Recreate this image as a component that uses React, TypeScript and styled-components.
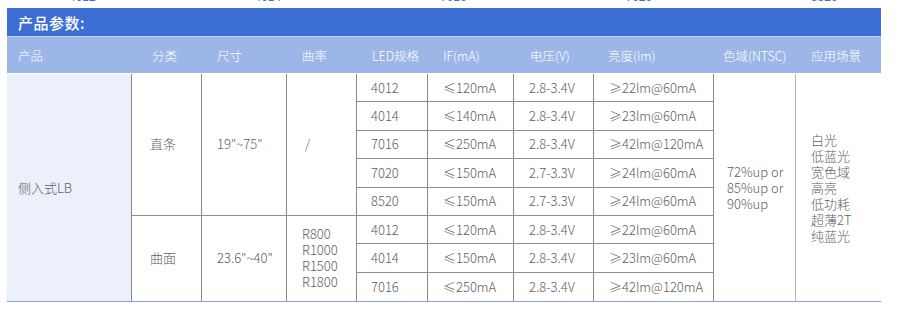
import React from "react";
import styled, { createGlobalStyle } from "styled-components";

const GlobalStyle = createGlobalStyle`
  html, body { margin: 0; padding: 0; background: #ffffff; }
  body { font-family: "Noto Sans CJK SC", "Noto Sans", sans-serif; }
`;

const Page = styled.div`
  width: 874px;
  padding: 0 19px 0 7px;
`;

const TopStrip = styled.div`
  height: 8px;
  overflow: hidden;
`;

const TopRow = styled.div`
  display: grid;
  grid-template-columns: repeat(5, 185.5px);
  padding-left: 62px;
  margin-top: -10px;
  font-size: 12px;
  line-height: 12px;
  color: #3f6fd2;
`;

const TitleBar = styled.div`
  height: 28px;
  background: #3c6ed3;
  border-bottom: 1px solid #c2d2f2;
  color: #ffffff;
  font-size: 15px;
  font-weight: 500;
  display: flex;
  align-items: center;
  padding-left: 11px;
  letter-spacing: 0.5px;
`;

const cols = "125px 70px 85px 70px 71px 86px 80px 120px 82px 85px";

const HeaderRow = styled.div`
  display: grid;
  grid-template-columns: ${cols};
  height: 36px;
  background: #9db6e8;
  margin-bottom: 1px;
`;

const HeadCell = styled.div<{ $pl: number }>`
  display: flex;
  align-items: center;
  padding-left: ${(p) => p.$pl}px;
  color: #ffffff;
  font-size: 12.5px;
  font-weight: 300;
  white-space: nowrap;
`;

const Body = styled.div`
  display: grid;
  grid-template-columns: ${cols};
  grid-template-rows: repeat(8, 1fr);
  height: 228px;
  box-sizing: border-box;
  border-bottom: 1px solid #86a3e0;
`;

const Cell = styled.div<{
  $r: string;
  $c: string;
  $pl?: number;
  $bb?: boolean;
  $br?: string;
  $bg?: string;
}>`
  grid-row: ${(p) => p.$r};
  grid-column: ${(p) => p.$c};
  box-sizing: border-box;
  display: flex;
  flex-direction: column;
  justify-content: center;
  padding-left: ${(p) => p.$pl ?? 15}px;
  background: ${(p) => p.$bg ?? "transparent"};
  border-right: ${(p) => (p.$br ? `1px solid ${p.$br}` : "none")};
  border-bottom: ${(p) => (p.$bb ? "1px solid #8e8e8e" : "none")};
  color: #606060;
  font-size: 13px;
  font-weight: 300;
  line-height: 16px;
  white-space: nowrap;
`;

const headers: [string, number][] = [
  ["产品", 11],
  ["分类", 20],
  ["尺寸", 15],
  ["曲率", 15],
  ["LED规格", 15],
  ["IF(mA)", 15],
  ["电压(V)", 16],
  ["亮度(lm)", 14],
  ["色域(NTSC)", 9],
  ["应用场景", 15],
];

const ledRows: [string, string, string, string][] = [
  ["4012", "≤120mA", "2.8-3.4V", "≥22lm@60mA"],
  ["4014", "≤140mA", "2.8-3.4V", "≥23lm@60mA"],
  ["7016", "≤250mA", "2.8-3.4V", "≥42lm@120mA"],
  ["7020", "≤150mA", "2.7-3.3V", "≥24lm@60mA"],
  ["8520", "≤150mA", "2.7-3.3V", "≥24lm@60mA"],
  ["4012", "≤120mA", "2.8-3.4V", "≥22lm@60mA"],
  ["4014", "≤150mA", "2.8-3.4V", "≥23lm@60mA"],
  ["7016", "≤250mA", "2.8-3.4V", "≥42lm@120mA"],
];

const DARK = "#8a8a8a";
const LIGHT = "#b4b4b4";

export default function App() {
  return (
    <>
      <GlobalStyle />
      <Page>
        <TopStrip>
          <TopRow>
            {["4012", "4014", "7016", "7020", "8520"].map((t, i) => (
              <span key={i}>{t}</span>
            ))}
          </TopRow>
        </TopStrip>
        <TitleBar>产品参数:</TitleBar>
        <HeaderRow>
          {headers.map(([t, pl]) => (
            <HeadCell key={t} $pl={pl}>
              {t}
            </HeadCell>
          ))}
        </HeaderRow>
        <Body>
          <Cell $r="1 / 9" $c="1" $pl={11} $bg="#ebf0fa" $br={DARK}>
            侧入式LB
          </Cell>
          <Cell $r="1 / 6" $c="2" $pl={18} $br={DARK} $bb>
            直条
          </Cell>
          <Cell $r="1 / 6" $c="3" $br={DARK} $bb>
            19"~75"
          </Cell>
          <Cell $r="1 / 6" $c="4" $pl={18} $br={DARK} $bb>
            /
          </Cell>
          <Cell $r="6 / 9" $c="2" $pl={18} $br={DARK}>
            曲面
          </Cell>
          <Cell $r="6 / 9" $c="3" $br={DARK}>
            23.6"~40"
          </Cell>
          <Cell $r="6 / 9" $c="4" $br={DARK}>
            <span>R800</span>
            <span>R1000</span>
            <span>R1500</span>
            <span>R1800</span>
          </Cell>
          {ledRows.map((row, i) =>
            row.map((v, j) => (
              <Cell
                key={`${i}-${j}`}
                $r={`${i + 1}`}
                $c={`${j + 5}`}
                $br={DARK}
                $bb={i < 7}
                $pl={j === 0 ? 14 : 15}
              >
                {v}
              </Cell>
            ))
          )}
          <Cell $r="1 / 9" $c="9" $pl={13} $br={LIGHT}>
            <span>72%up or</span>
            <span>85%up or</span>
            <span>90%up</span>
          </Cell>
          <Cell $r="1 / 9" $c="10">
            <span>白光</span>
            <span>低蓝光</span>
            <span>宽色域</span>
            <span>高亮</span>
            <span>低功耗</span>
            <span>超薄2T</span>
            <span>纯蓝光</span>
          </Cell>
        </Body>
      </Page>
    </>
  );
}
